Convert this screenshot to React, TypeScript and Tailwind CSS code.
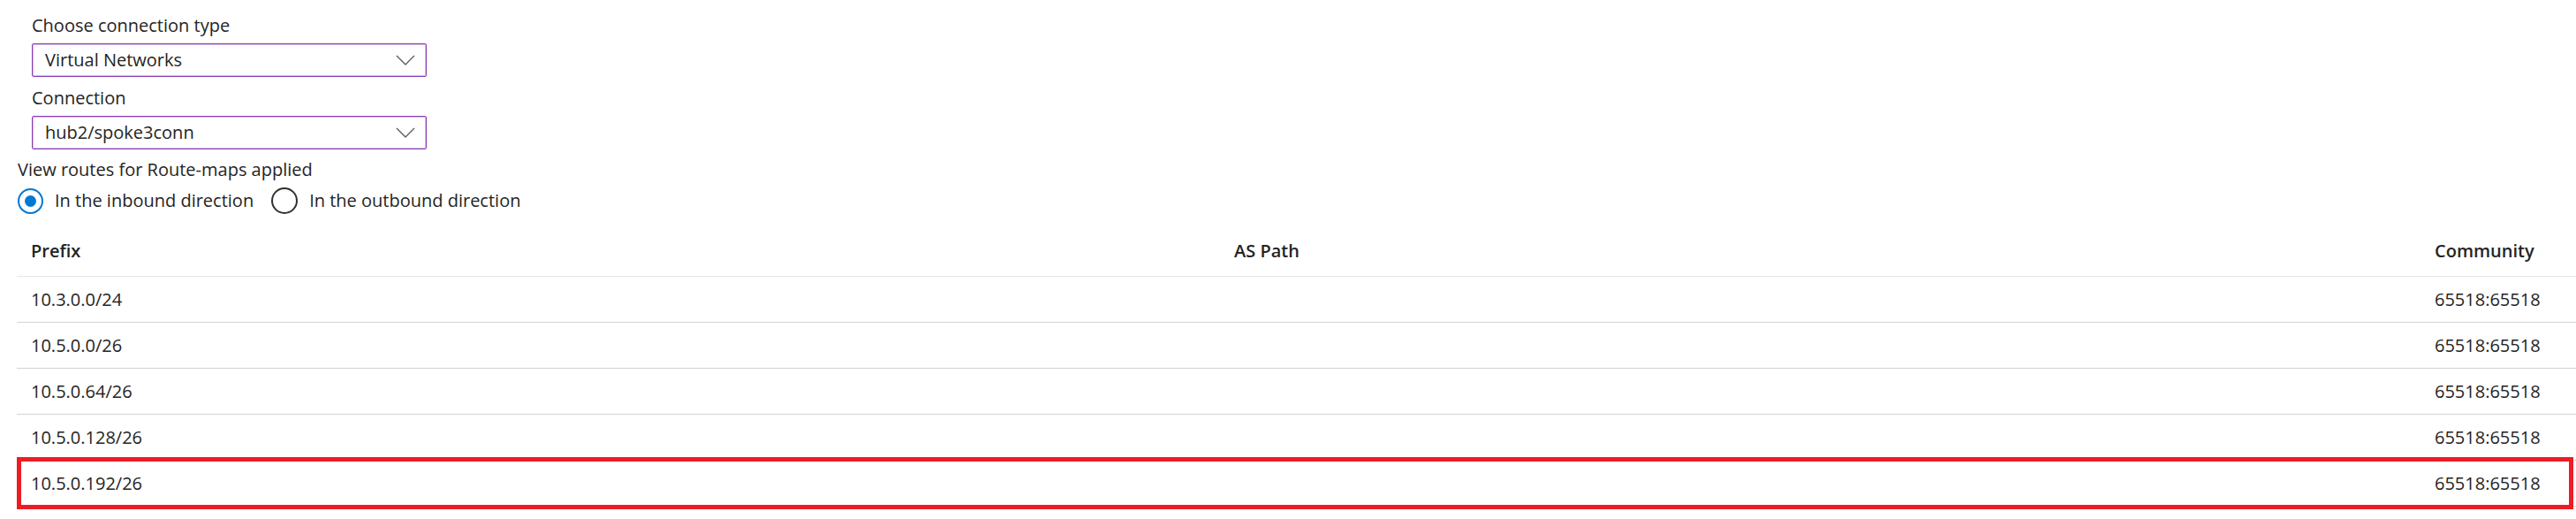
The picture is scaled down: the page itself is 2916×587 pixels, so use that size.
const routes = [
  { prefix: "10.3.0.0/24", asPath: "", community: "65518:65518" },
  { prefix: "10.5.0.0/26", asPath: "", community: "65518:65518" },
  { prefix: "10.5.0.64/26", asPath: "", community: "65518:65518" },
  { prefix: "10.5.0.128/26", asPath: "", community: "65518:65518" },
  { prefix: "10.5.0.192/26", asPath: "", community: "65518:65518", highlight: true },
];

function Dropdown({ value }: { value: string }) {
  return (
    <div className="mt-[6px] flex h-[38px] w-[447px] items-center justify-between rounded-[2px] border border-[#8a3db6] pl-[14px] pr-[12px] shadow-[inset_0_0_0_1px_rgba(138,61,182,0.35)]">
      <span>{value}</span>
      <svg width="22" height="12" viewBox="0 0 22 12" fill="none">
        <polyline points="1,1 11,11 21,1" stroke="#605e5c" strokeWidth="1.4" />
      </svg>
    </div>
  );
}

function Radio({ checked, label }: { checked?: boolean; label: string }) {
  return (
    <label className="flex items-center gap-[13px]">
      {checked ? (
        <span className="flex h-[29px] w-[29px] items-center justify-center rounded-full border-2 border-[#0078d4]">
          <span className="h-[13px] w-[13px] rounded-full bg-[#0078d4]" />
        </span>
      ) : (
        <span className="h-[30px] w-[30px] rounded-full border-2 border-[#323130]" />
      )}
      <span>{label}</span>
    </label>
  );
}

export default function App() {
  return (
    <div className="h-[587px] w-[2916px] overflow-hidden bg-white font-['Open_Sans',sans-serif] text-[20px] leading-[28px] text-[#252423]">
      <div className="pl-[36px] pt-[15px]">
        <div>Choose connection type</div>
        <Dropdown value="Virtual Networks" />
        <div className="mt-[10px]">Connection</div>
        <Dropdown value="hub2/spoke3conn" />
      </div>

      <div className="mt-[9px] pl-[20px]">
        <div>View routes for Route-maps applied</div>
        <div className="mt-[6px] flex h-[30px] items-center gap-[20px]">
          <Radio checked label="In the inbound direction" />
          <Radio label="In the outbound direction" />
        </div>
      </div>

      <div className="ml-[19px] mt-[28px]">
        <div className="grid grid-cols-[1362px_1359px_1fr] border-b border-[#e6e6e6] pb-[14px] font-semibold">
          <div className="pl-[16px]">Prefix</div>
          <div className="pl-[16px]">AS Path</div>
          <div className="pl-[16px]">Community</div>
        </div>
        {routes.map((r) => (
          <div
            key={r.prefix}
            className="relative grid h-[52px] grid-cols-[1362px_1359px_1fr] items-center border-b border-[#d4d4d4]"
          >
            <div className="pl-[16px]">{r.prefix}</div>
            <div className="pl-[16px]">{r.asPath}</div>
            <div className="pl-[16px]">{r.community}</div>
            {r.highlight && (
              <div className="absolute -bottom-[4px] -top-[4px] left-0 right-[3px] border-[5px] border-[#ed1c24]" />
            )}
          </div>
        ))}
      </div>
    </div>
  );
}
